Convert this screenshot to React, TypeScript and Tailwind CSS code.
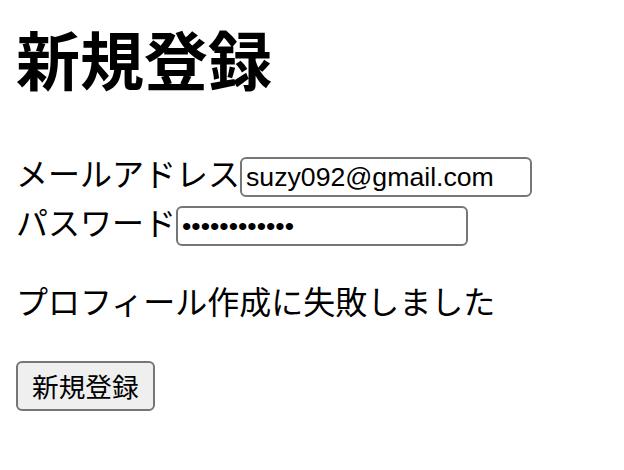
const jp = "font-['Noto_Sans_CJK_JP',sans-serif]";
const field =
  "w-[292px] h-[40px] border-2 border-[#767676] rounded-[6px] px-[4px] text-[26.67px] text-black bg-white font-['Liberation_Sans',Arial,sans-serif] outline-none align-baseline";

export default function App() {
  return (
    <div className={"min-h-screen bg-white text-black px-[16px] " + jp}>
      <h1 className="pt-[18px] text-[64px] leading-[78px] font-bold">新規登録</h1>
      <form className="mt-[52px]" onSubmit={(e) => e.preventDefault()}>
        <div className="text-[32px] leading-[48px]">
          <label>
            メールアドレス
            <input type="email" className={field} defaultValue="suzy092@gmail.com" />
          </label>
        </div>
        <div className="text-[32px] leading-[48px]">
          <label>
            パスワード
            <input type="password" className={field} defaultValue="password1234" />
          </label>
        </div>
        <p className="mt-[30px] text-[32px] leading-[48px]">プロフィール作成に失敗しました</p>
        <button
          type="submit"
          className="mt-[37px] h-[50px] px-[14px] border-2 border-[#767676] rounded-[6px] bg-[#efefef] text-[26.67px] leading-none"
        >
          新規登録
        </button>
      </form>
    </div>
  );
}
